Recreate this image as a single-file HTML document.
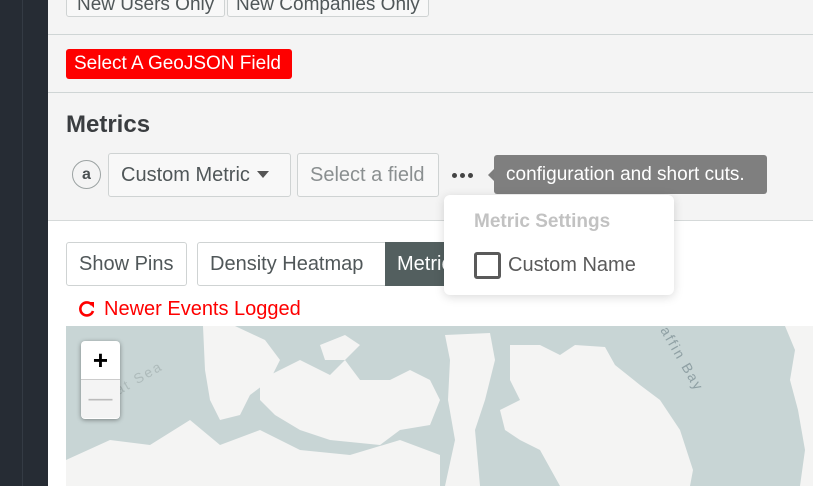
<!DOCTYPE html>
<html><head><style>
*{box-sizing:border-box;margin:0;padding:0}
body{width:813px;height:486px;overflow:hidden;position:relative;background:#fff;font-family:"Liberation Sans",Roboto,sans-serif}
.side{position:absolute;left:0;top:0;width:48px;height:486px;background:#262c34}
.side:after{content:"";position:absolute;left:22px;top:0;width:1px;height:486px;background:#343b44}
.top{position:absolute;left:48px;top:0;width:765px;height:221px;background:#f4f4f4;border-bottom:1px solid #d5d9d9}
.btn{position:absolute;border:1px solid #cfd3d3;border-radius:3px;background:#f8f8f8;color:#505759;font-size:20px;line-height:42px;padding:0 12px;white-space:nowrap}
.abs{position:absolute;white-space:nowrap}
</style></head><body>
<div class="side"></div>
<div class="top">
  <div class="btn" style="left:18px;top:-22px;height:39px;padding:15px 10px 0;line-height:22px;font-size:19px">New Users Only</div>
  <div class="btn" style="left:179px;top:-22px;height:39px;padding:15px 8px 0;line-height:22px;font-size:19px">New Companies Only</div>
  <div class="abs" style="left:0;top:34px;width:765px;height:1px;background:#cfd5d5"></div>
  <div class="abs" style="left:18px;top:49px;width:226px;height:30px;background:#fe0000;border-radius:3px;color:#fff;font-size:19px;line-height:30px;padding-left:8px">Select A GeoJSON Field</div>
  <div class="abs" style="left:0;top:92px;width:765px;height:1px;background:#cfd5d5"></div>
  <div class="abs" style="left:18px;top:111px;font-size:24px;font-weight:bold;color:#3a3d40">Metrics</div>
  <div class="abs" style="left:24px;top:160px;width:29px;height:29px;border:1px solid #9ca3a3;border-radius:50%;text-align:center;line-height:27px;font-weight:bold;color:#4b5153;font-size:16px">a</div>
  <div class="btn" style="left:60px;top:153px;height:44px;width:183px">Custom Metric <span style="display:inline-block;width:0;height:0;border-left:6px solid transparent;border-right:6px solid transparent;border-top:7px solid #555;vertical-align:3px;margin-left:2px"></span></div>
  <div class="btn" style="left:249px;top:153px;height:44px;width:142px;color:#8a8f90">Select a field</div>
  <div class="abs" style="left:404px;top:173px;width:22px;height:6px">
    <span style="position:absolute;left:0;top:0;width:5px;height:5px;border-radius:50%;background:#444"></span>
    <span style="position:absolute;left:8px;top:0;width:5px;height:5px;border-radius:50%;background:#444"></span>
    <span style="position:absolute;left:16px;top:0;width:5px;height:5px;border-radius:50%;background:#444"></span>
  </div>
  <div class="abs" style="left:440px;top:169px;width:0;height:0;border:6px solid transparent;border-right-color:#7d7d7d;border-left:0"></div>
  <div class="abs" style="left:446px;top:155px;width:273px;height:39px;background:#7f7f7f;border-radius:3px;color:#fff;font-size:19px;line-height:39px;padding-left:12px">configuration and short cuts.</div>
</div>
<div class="btn" style="left:66px;top:242px;height:44px;background:#fff">Show Pins</div>
<div class="btn" style="left:197px;top:242px;height:44px;width:190px;background:#fff;border-radius:3px 0 0 3px">Density Heatmap</div>
<div class="abs" style="left:385px;top:242px;width:70px;height:44px;background:#535f5f;color:#fff;font-size:20px;line-height:44px;padding-left:12px">Metric</div>
<div class="abs" style="left:78px;top:298px;font-size:20px;color:#fe0000"><svg width="18" height="18" viewBox="0 0 18 18" style="vertical-align:-3px;margin-right:8px"><path d="M14 5 A6.5 6.5 0 1 0 15 11" fill="none" stroke="#f00" stroke-width="2.6"/><path d="M10 2 L16 2 L16 8Z" fill="#f00"/></svg>Newer Events Logged</div>
<svg class="abs" style="left:66px;top:326px" width="747" height="160" viewBox="66 326 747 160">
<rect x="66" y="326" width="747" height="160" fill="#c8d5d5"/>
<g fill="#f4f4f3">
<path d="M203 326 L235 326 L265 340 L280 360 L270 380 L250 395 L240 415 L220 420 L210 400 L205 370Z"/>
<path d="M260 380 L300 360 L330 375 L345 360 L360 380 L390 380 L410 370 L430 380 L440 400 L430 425 L400 430 L380 445 L330 440 L300 430 L275 415 L260 400Z"/>
<path d="M320 345 L345 335 L360 345 L345 360 L325 360Z"/>
<path d="M66 460 L110 440 L150 445 L190 420 L220 445 L260 430 L300 450 L350 455 L400 440 L440 455 L440 486 L66 486Z"/>
<path d="M445 335 L490 333 L495 360 L485 400 L475 430 L480 486 L445 486 L455 440 L448 400 L450 360Z"/>
<path d="M510 345 L540 345 L560 355 L575 345 L605 347 L615 365 L640 385 L660 400 L680 430 L693 470 L690 486 L560 486 L540 450 L520 440 L505 430 L500 410 L520 400 L510 380Z"/>
<path d="M785 326 L813 326 L813 486 L800 486 L805 450 L798 410 L790 380 L795 350Z"/>
</g>
<text x="0" y="0" transform="translate(660 330) rotate(60)" font-size="14" fill="#8fa0a4" letter-spacing="2">affin Bay</text>
<text x="0" y="0" transform="translate(110 400) rotate(-30)" font-size="14" fill="#aebbbb" letter-spacing="2">eat Sea</text>
</svg>
<div class="abs" style="left:81px;top:341px;width:39px;height:78px;background:#fff;border-radius:4px;box-shadow:0 1px 5px rgba(0,0,0,.4)">
  <div style="height:39px;border-bottom:1px solid #ccc;text-align:center;font-size:26px;font-weight:bold;line-height:38px;color:#000">+</div>
  <div style="height:38px;text-align:center;font-size:24px;line-height:38px;color:#bbb;background:#f4f4f4;border-radius:0 0 4px 4px">&#8212;</div>
</div>
<div class="abs" style="left:444px;top:195px;width:230px;height:100px;background:#fff;border-radius:6px;box-shadow:0 2px 10px rgba(0,0,0,.15)">
  <div class="abs" style="left:30px;top:16px;font-size:19px;font-weight:bold;color:#c2c2c2">Metric Settings</div>
  <div class="abs" style="left:30px;top:57px;width:27px;height:27px;border:3px solid #5a5a5a;border-radius:3px"></div>
  <div class="abs" style="left:64px;top:59px;font-size:20px;color:#5a5a5a">Custom Name</div>
</div>
</body></html>
